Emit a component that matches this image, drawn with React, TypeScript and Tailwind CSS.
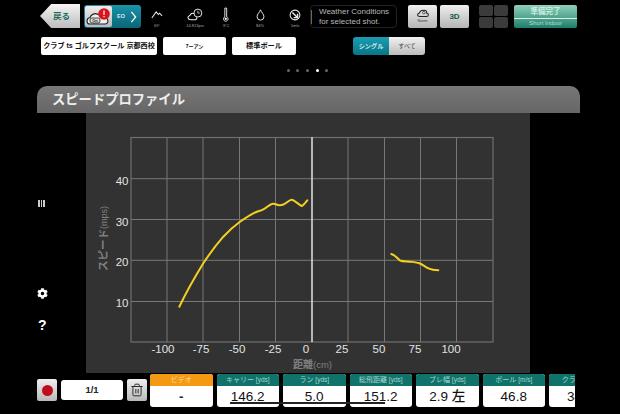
import React from 'react';
import { Trash2 } from 'lucide-react';
import { FaCog } from 'react-icons/fa';

const JP = "font-['Liberation_Sans','Noto_Sans_CJK_JP',sans-serif]";

const gridX = [167, 203, 239.5, 275.5, 348, 384.5, 420.5, 456.5];
const gridY = [178.7, 219.5, 260.3, 301.5];
const labelsX = [
  { x: 163, t: '-100' },
  { x: 201, t: '-75' },
  { x: 237, t: '-50' },
  { x: 273, t: '-25' },
  { x: 306, t: '0' },
  { x: 342, t: '25' },
  { x: 379, t: '50' },
  { x: 415, t: '75' },
  { x: 451, t: '100' },
];
const labelsY = [
  { y: 185, t: '40' },
  { y: 225.5, t: '30' },
  { y: 266, t: '20' },
  { y: 307, t: '10' },
];

const stats = [
  { label: 'キャリー', unit: '[yds]', value: '146.2' },
  { label: 'ラン', unit: '[yds]', value: '5.0' },
  { label: '総飛距離', unit: '[yds]', value: '151.2' },
  { label: 'ブレ幅', unit: '[yds]', value: '2.9 左' },
  { label: 'ボール', unit: '[m/s]', value: '46.8' },
  { label: 'クラブ', unit: '[m/s]', value: '34.9' },
];

const Chart = () => (
  <svg viewBox="86 113 444 260" className="block w-[444px] h-[260px]">
    <rect x="131" y="137.5" width="362" height="204.5" fill="none" stroke="#6f6f6f" strokeWidth="1.2" />
    {gridX.map((x) => (
      <line key={x} x1={x} x2={x} y1="137" y2="342" stroke="#777" strokeWidth="1" />
    ))}
    {gridY.map((y) => (
      <line key={y} x1="131" x2="493" y1={y} y2={y} stroke="#777" strokeWidth="1" />
    ))}
    <line x1="312" x2="312" y1="137" y2="342" stroke="#d8d8d8" strokeWidth="1.6" />
    <path
      d="M179.3 306.7C183 299 190 285 203.3 263.3C210 253 217 244 223.3 236.7C229 230.500 234 226 240 221.700C246 217.500 250 215 253.300 213.300C257 211.500 260 211 263.300 209.300C267 207.500 269 204.500 272.700 203.700C275 203.500 277 205 279 205.300C282 205.700 284 204.500 286 203C288 201.500 290 199.700 291.700 199.700C294 199.700 298 204 301.700 206C303.500 205.500 305.500 202.500 307.300 200.300"
      fill="none"
      stroke="#f2d21e"
      strokeWidth="2"
      strokeLinecap="round"
    />
    <path
      d="M391.300 254C395 255 397 258 400 260.500C403 261.700 406 261.300 410 261.700C414 262.200 417 262.500 419.300 263.300C423 264.700 425 267 428.300 268.300C431 269.500 435 270.200 438.300 270.300"
      fill="none"
      stroke="#f2d21e"
      strokeWidth="2"
      strokeLinecap="round"
    />
    {labelsX.map((l) => (
      <text key={l.t} x={l.x} y="352.5" textAnchor="middle" fill="#e2e2e2" fontSize="11.5" fontFamily="Liberation Sans">
        {l.t}
      </text>
    ))}
    {labelsY.map((l) => (
      <text key={l.t} x="128.5" y={l.y} textAnchor="end" fill="#e2e2e2" fontSize="11.5" fontFamily="Liberation Sans">
        {l.t}
      </text>
    ))}
    <text
      transform="translate(107,238.5) rotate(-90)"
      textAnchor="middle"
      fill="#808080"
      fontSize="10.5"
      fontWeight="700"
      fontFamily="Liberation Sans, Noto Sans CJK JP, sans-serif"
    >
      スピード<tspan fontSize="9" fontWeight="400">(mps)</tspan>
    </text>
    <text
      x="312.5"
      y="368"
      textAnchor="middle"
      fill="#808080"
      fontSize="10"
      fontWeight="700"
      fontFamily="Liberation Sans, Noto Sans CJK JP, sans-serif"
    >
      距離<tspan fontSize="9.5" fontWeight="400">(cm)</tspan>
    </text>
  </svg>
);

const WeatherItem = ({ icon, label, className }: { icon: React.ReactNode; label: string; className: string }) => (
  <div className={`flex flex-col items-center w-[24px] shrink-0 ${className}`}>
    <div className="h-[17px] flex items-center justify-center">{icon}</div>
    <span className="text-[4px] leading-[6px] text-[#aaaaaa] whitespace-nowrap">{label}</span>
  </div>
);

const StatCard = ({ label, unit, value }: { label: string; unit: string; value: string }) => (
  <div className="w-[62.5px] shrink-0 rounded-[3px] overflow-hidden bg-white">
    <div className="h-[12px] bg-[#0f736b] text-center text-[7px] leading-[12px] text-[#a9d5cf] whitespace-nowrap">
      {label} <span className="text-[6.5px]">{unit}</span>
    </div>
    <div className="h-[21px] text-center text-[13.5px] leading-[22px] font-medium text-[#111] whitespace-nowrap">{value}</div>
  </div>
);

export default function App() {
  return (
    <div className={`w-[620px] h-[414px] bg-black overflow-hidden flex flex-col ${JP}`}>
      {/* top row */}
      <div className="h-[33px] pt-[4px] pl-[40px] flex items-start">
        <button className="w-[40px] h-[24px] shrink-0 [clip-path:polygon(0_50%,28%_0,100%_0,100%_100%,28%_100%)] bg-gradient-to-b from-[#f4f4f4] to-[#bdbdbd] text-[#1e6a60] text-[8.5px] font-bold pl-[3px]">
          戻る
        </button>
        <div className="ml-[4px] mt-[1px] w-[57px] h-[23px] shrink-0 rounded-[3px] bg-gradient-to-b from-[#1a93a8] to-[#0a6678] flex items-center overflow-hidden">
          <div className="relative ml-[1px] w-[27px] h-[21px] rounded-[2px] bg-gradient-to-b from-[#eeeeee] to-[#b9b9b9]">
            <svg viewBox="0 0 27 21" className="absolute inset-0 w-[27px] h-[21px]">
              <path d="M5 18c-4 0-4-6 0-6.500 1-3 5-5 8-3 3-1 6 1 6 3 5 0 5 6.500 1 6.500z" fill="#eee" stroke="#222" strokeWidth="1.1" />
              <rect x="5" y="12" width="10" height="5" rx="2" fill="#ddd" stroke="#222" strokeWidth=".8" />
              <text x="10" y="16.200" textAnchor="middle" fontSize="4" fontWeight="700" fill="#222" fontFamily="Liberation Sans">On</text>
              <circle cx="19" cy="8" r="5.800" fill="#d9141c" />
              <rect x="18.400" y="4.500" width="1.200" height="4.500" fill="#fff" />
              <rect x="18.400" y="10" width="1.200" height="1.200" fill="#fff" />
            </svg>
          </div>
          <span className="ml-[5px] text-[5.5px] font-bold text-[#cfeaf0]">EO</span>
          <svg viewBox="0 0 8 14" className="ml-[5px] w-[7px] h-[12px]">
            <path d="M1.500 1l5 6-5 6" fill="none" stroke="#fff" strokeWidth="1.500" />
          </svg>
        </div>

        <div className="flex text-center ml-[4px] pt-[2px]">
          <WeatherItem
            className=""
            label="69°"
            icon={
              <svg viewBox="0 0 14 10" className="w-[12px] h-[9px]">
                <path d="M1 9l5-7 2.500 3 1.500-1.500 3 3" fill="none" stroke="#eee" strokeWidth="1.200" />
              </svg>
            }
          />
          <WeatherItem
            className="ml-[14px]"
            label="14.813psi"
            icon={
              <svg viewBox="0 0 18 13" className="w-[17px] h-[13px]">
                <circle cx="11.500" cy="5" r="4.200" fill="none" stroke="#eee" strokeWidth="1" />
                <path d="M11.500 2.500v2.500h2" fill="none" stroke="#eee" strokeWidth=".8" />
                <path d="M4 12c-3.500 0-4-3.500-1-4.500 1-2 3-2.500 4.500-2 M10 9.500c1 1 0 2.500-1.500 2.500H4" fill="none" stroke="#eee" strokeWidth="1.100" />
              </svg>
            }
          />
          <WeatherItem
            className="ml-[7px]"
            label="3°C"
            icon={
              <svg viewBox="0 0 6 16" className="w-[5.500px] h-[15px]">
                <path d="M2 1h2v9.500a2.500 2.500 0 1 1-2 0z" fill="none" stroke="#eee" strokeWidth="1" />
                <circle cx="3" cy="12.700" r="1.300" fill="#eee" />
              </svg>
            }
          />
          <WeatherItem
            className="ml-[10px]"
            label="84%"
            icon={
              <svg viewBox="0 0 10 14" className="w-[9px] h-[12px]">
                <path d="M5 1c1 3 4 5 4 8a4 4 0 0 1-8 0c0-3 3-5 4-8z" fill="none" stroke="#eee" strokeWidth="1.100" />
              </svg>
            }
          />
          <WeatherItem
            className="ml-[11px]"
            label="1m/s"
            icon={
              <svg viewBox="0 0 14 14" className="w-[12px] h-[12px]">
                <circle cx="7" cy="7" r="5.700" fill="none" stroke="#eee" strokeWidth="1.200" />
                <path d="M4 4l5.500 5.500M10 5.500v4.500H5.500" fill="none" stroke="#eee" strokeWidth="1.600" />
              </svg>
            }
          />
        </div>

        <div className="ml-[3px] mt-[1px] w-[87px] h-[23px] shrink-0 rounded-[4px] border border-[#222] flex items-center">
          <div className="w-[1px] h-[14px] bg-[#666]" />
          <div className="ml-[7px] text-[8px] leading-[10px] text-[#b9b9b9] whitespace-nowrap">
            Weather Conditions
            <br />
            for selected shot.
          </div>
        </div>

        <button className="ml-[11px] mt-[1px] w-[29px] h-[23px] shrink-0 rounded-[2px] bg-gradient-to-b from-[#efefef] to-[#b5b5b5] flex flex-col items-center">
          <svg viewBox="0 0 14 10" className="w-[12px] h-[10px] mt-[3px]">
            <path d="M3 9c-3 0-3-4 0-4 0-2 3-4 5-3 2-1 4 1 3 3 3 0 3 4 0 4z" fill="none" stroke="#222" strokeWidth="1.200" />
            <circle cx="8" cy="4.500" r="1.500" fill="none" stroke="#222" strokeWidth=".8" />
          </svg>
          <span className="text-[4px] leading-[5px] text-[#333]">Norm</span>
        </button>
        <button className="ml-[3px] mt-[1px] w-[29px] h-[23px] shrink-0 rounded-[2px] bg-gradient-to-b from-[#efefef] to-[#b5b5b5] text-[#115c52] text-[8px] font-bold">
          3D
        </button>
        <div className="ml-[10px] mt-[1px] grid grid-cols-2 gap-[1px] w-[29px] h-[23px] shrink-0">
          <div className="rounded-[2px] bg-[#3b3b3b]" />
          <div className="rounded-[2px] bg-[#3b3b3b]" />
          <div className="rounded-[2px] bg-[#3b3b3b]" />
          <div className="rounded-[2px] bg-[#3b3b3b]" />
        </div>
        <div className="ml-[6px] mt-[1px] w-[63px] h-[23px] shrink-0 rounded-[2px] overflow-hidden flex flex-col bg-gradient-to-b from-[#8dd0b9] to-[#14806e]">
          <div className="h-[14px] text-center text-[7.5px] leading-[14px] font-bold text-[#cdeee2] border-b border-[#d9f0e8]">準備完了</div>
          <div className="text-center text-[6px] leading-[9px] text-[#b5ded2]">Short Indoor</div>
        </div>
      </div>

      {/* selectors */}
      <div className="h-[18px] mt-[4px] pl-[41px] flex items-stretch">
        <div className="w-[116px] shrink-0 rounded-[2px] bg-white text-center text-[7.1px] leading-[18px] font-bold text-[#111] whitespace-nowrap">クラブ ts ゴルフスクール 京都西校</div>
        <div className="ml-[6px] w-[63px] shrink-0 rounded-[2px] bg-white text-center text-[5px] leading-[18px] font-bold text-[#111]">7ーアン</div>
        <div className="ml-[6px] w-[64px] shrink-0 rounded-[2px] bg-white text-center text-[7.2px] leading-[18px] font-bold text-[#111]">標準ボール</div>
        <div className="ml-[57px] flex w-[72px] shrink-0 rounded-[3px] overflow-hidden">
          <div className="w-[36px] bg-gradient-to-b from-[#1a9db3] to-[#0a7587] text-center text-[6.200px] leading-[18px] font-bold text-[#d3eef3]">シングル</div>
          <div className="w-[36px] bg-gradient-to-b from-[#f2f2f2] to-[#bcbcbc] text-center text-[6px] leading-[18px] text-[#444]">すべて</div>
        </div>
      </div>

      {/* page dots */}
      <div className="mt-[14px] h-[3px] pl-[286.5px] flex gap-[6.7px]">
        <div className="w-[3px] h-[3px] rounded-full bg-[#666]" />
        <div className="w-[3px] h-[3px] rounded-full bg-[#666]" />
        <div className="w-[3px] h-[3px] rounded-full bg-[#666]" />
        <div className="w-[3px] h-[3px] rounded-full bg-white" />
        <div className="w-[3px] h-[3px] rounded-full bg-[#666]" />
      </div>

      {/* main panel */}
      <div className="mt-[14px] ml-[37px] w-[543px]">
        <div className="h-[27px] rounded-t-[10px] bg-gradient-to-b from-[#777777] to-[#666666] pl-[15px] text-[13.3px] leading-[27px] font-bold text-[#eeeeee] whitespace-nowrap">
          スピードプロファイル
        </div>
        <div className="flex h-[260px]">
          <div className="w-[49px] shrink-0 flex flex-col items-start text-white">
            <div className="mt-[87px] ml-[1px] flex gap-[1px] h-[7px] w-[7px]">
              <div className="w-[1.500px] h-[7px] bg-[#ccc]" />
              <div className="w-[1.500px] h-[7px] bg-[#ccc]" />
              <div className="w-[1.500px] h-[7px] bg-[#ccc]" />
            </div>
            <FaCog size={11} className="mt-[81px]" />
            <div className="mt-[18px] ml-[1px] text-[14px] leading-[16px] font-bold">?</div>
          </div>
          <div className="w-[444px] h-[260px] bg-[#323232]">
            <Chart />
          </div>
        </div>
      </div>

      {/* bottom bar */}
      <div className="relative mt-[1px] pl-[37px] flex items-start w-[575px] overflow-hidden">
        <div className="mt-[5px] w-[20px] h-[22px] shrink-0 rounded-[2px] bg-gradient-to-b from-[#efefef] to-[#b9b9b9] flex items-center justify-center">
          <div className="w-[11px] h-[11px] rounded-full bg-[#c00d1e]" />
        </div>
        <div className="ml-[4px] mt-[6px] w-[62px] h-[20px] shrink-0 rounded-[3px] bg-white text-center text-[9.5px] leading-[20px] font-bold text-[#222]">1/1</div>
        <div className="ml-[4px] mt-[5px] w-[20px] h-[22px] shrink-0 rounded-[2px] bg-gradient-to-b from-[#efefef] to-[#b9b9b9] flex items-center justify-center">
          <Trash2 size={14} strokeWidth={1.6} className="text-[#222]" />
        </div>
        <div className="ml-[3px] flex gap-[4px] shrink-0">
          <div className="w-[62.5px] shrink-0 rounded-[3px] overflow-hidden bg-white">
            <div className="h-[12px] bg-[#f49a12] text-center text-[7px] leading-[12px] text-[#fcdca8]">ビデオ</div>
            <div className="h-[21px] text-center text-[13.5px] leading-[22px] font-bold text-[#222]">-</div>
          </div>
          {stats.map((s) => (
            <StatCard key={s.label} label={s.label} unit={s.unit} value={s.value} />
          ))}
        </div>
        <div className="absolute left-[230px] top-[28px] w-[155px] h-[1.5px] bg-[#222]" />
      </div>
    </div>
  );
}
